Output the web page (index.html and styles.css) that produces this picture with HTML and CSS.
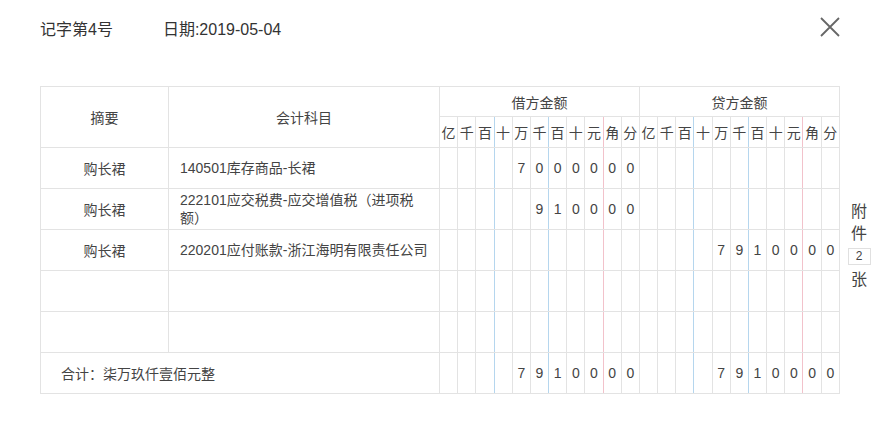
FILE: index.html
```html
<!DOCTYPE html>
<html lang="zh">
<head>
<meta charset="utf-8">
<title>记字第4号</title>
<link rel="stylesheet" href="styles.css">
</head>
<body>
<div class="page">
  <header class="head">
    <div class="head-info">
      <span class="voucher-no">记字第4号</span>
      <span class="voucher-date">日期:2019-05-04</span>
    </div>
    <button class="close" aria-label="关闭">
      <svg width="20" height="20" viewBox="0 0 20 20"><path d="M1 1L19 19M19 1L1 19" stroke="#666" stroke-width="1.8" fill="none"/></svg>
    </button>
  </header>
  <div class="main">
    <table class="voucher">
      <colgroup>
        <col class="c-sum"><col class="c-acc">
        <col><col><col><col><col><col><col><col><col><col><col>
        <col><col><col><col><col><col><col><col><col><col><col>
      </colgroup>
      <thead>
        <tr class="h1">
          <th rowspan="2">摘要</th>
          <th rowspan="2">会计科目</th>
          <th colspan="11">借方金额</th>
          <th colspan="11">贷方金额</th>
        </tr>
        <tr class="h2">
          <th class="d">亿</th><th class="d">千</th><th class="d b">百</th><th class="d">十</th><th class="d">万</th><th class="d b">千</th><th class="d">百</th><th class="d">十</th><th class="d r">元</th><th class="d">角</th><th class="d">分</th>
          <th class="d">亿</th><th class="d">千</th><th class="d b">百</th><th class="d">十</th><th class="d">万</th><th class="d b">千</th><th class="d">百</th><th class="d">十</th><th class="d r">元</th><th class="d">角</th><th class="d">分</th>
        </tr>
      </thead>
      <tbody>
        <tr>
          <td class="sum">购长裙</td>
          <td class="acc">140501库存商品-长裙</td>
          <td class="d"></td><td class="d"></td><td class="d b"></td><td class="d"></td><td class="d">7</td><td class="d b">0</td><td class="d">0</td><td class="d">0</td><td class="d r">0</td><td class="d">0</td><td class="d">0</td>
          <td class="d"></td><td class="d"></td><td class="d b"></td><td class="d"></td><td class="d"></td><td class="d b"></td><td class="d"></td><td class="d"></td><td class="d r"></td><td class="d"></td><td class="d"></td>
        </tr>
        <tr>
          <td class="sum">购长裙</td>
          <td class="acc">222101应交税费-应交增值税（进项税额）</td>
          <td class="d"></td><td class="d"></td><td class="d b"></td><td class="d"></td><td class="d"></td><td class="d b">9</td><td class="d">1</td><td class="d">0</td><td class="d r">0</td><td class="d">0</td><td class="d">0</td>
          <td class="d"></td><td class="d"></td><td class="d b"></td><td class="d"></td><td class="d"></td><td class="d b"></td><td class="d"></td><td class="d"></td><td class="d r"></td><td class="d"></td><td class="d"></td>
        </tr>
        <tr>
          <td class="sum">购长裙</td>
          <td class="acc">220201应付账款-浙江海明有限责任公司</td>
          <td class="d"></td><td class="d"></td><td class="d b"></td><td class="d"></td><td class="d"></td><td class="d b"></td><td class="d"></td><td class="d"></td><td class="d r"></td><td class="d"></td><td class="d"></td>
          <td class="d"></td><td class="d"></td><td class="d b"></td><td class="d"></td><td class="d">7</td><td class="d b">9</td><td class="d">1</td><td class="d">0</td><td class="d r">0</td><td class="d">0</td><td class="d">0</td>
        </tr>
        <tr>
          <td class="sum"></td>
          <td class="acc"></td>
          <td class="d"></td><td class="d"></td><td class="d b"></td><td class="d"></td><td class="d"></td><td class="d b"></td><td class="d"></td><td class="d"></td><td class="d r"></td><td class="d"></td><td class="d"></td>
          <td class="d"></td><td class="d"></td><td class="d b"></td><td class="d"></td><td class="d"></td><td class="d b"></td><td class="d"></td><td class="d"></td><td class="d r"></td><td class="d"></td><td class="d"></td>
        </tr>
        <tr>
          <td class="sum"></td>
          <td class="acc"></td>
          <td class="d"></td><td class="d"></td><td class="d b"></td><td class="d"></td><td class="d"></td><td class="d b"></td><td class="d"></td><td class="d"></td><td class="d r"></td><td class="d"></td><td class="d"></td>
          <td class="d"></td><td class="d"></td><td class="d b"></td><td class="d"></td><td class="d"></td><td class="d b"></td><td class="d"></td><td class="d"></td><td class="d r"></td><td class="d"></td><td class="d"></td>
        </tr>
        <tr>
          <td class="total" colspan="2">合计：柒万玖仟壹佰元整</td>
          <td class="d"></td><td class="d"></td><td class="d b"></td><td class="d"></td><td class="d">7</td><td class="d b">9</td><td class="d">1</td><td class="d">0</td><td class="d r">0</td><td class="d">0</td><td class="d">0</td>
          <td class="d"></td><td class="d"></td><td class="d b"></td><td class="d"></td><td class="d">7</td><td class="d b">9</td><td class="d">1</td><td class="d">0</td><td class="d r">0</td><td class="d">0</td><td class="d">0</td>
        </tr>
      </tbody>
    </table>
    <aside class="attach">
      <span>附</span>
      <span>件</span>
      <span class="count">2</span>
      <span>张</span>
    </aside>
  </div>
</div>
</body>
</html>
```

FILE: styles.css
```css
html, body {
  margin: 0;
  padding: 0;
  background: #fff;
}
body {
  font-family: "Liberation Sans", "Noto Sans CJK SC", sans-serif;
  color: #444;
  text-spacing-trim: space-all;
}
.page {
  padding: 0 0 0 40px;
}
.head {
  width: 800px;
  height: 54px;
  display: flex;
  align-items: center;
  justify-content: space-between;
}
.head-info {
  display: flex;
  gap: 50px;
  font-size: 16px;
  color: #333;
  padding-top: 1px;
}
.close {
  width: 20px;
  height: 20px;
  padding: 0;
  margin: 0;
  border: 0;
  background: none;
  display: flex;
}
.main {
  margin-top: 32px;
  display: flex;
}
.voucher {
  width: 800px;
  table-layout: fixed;
  border-collapse: collapse;
  font-size: 14px;
  color: #444;
}
.c-sum { width: 128px; }
.c-acc { width: 271px; }
.voucher th,
.voucher td {
  border: 1px solid #e3e3e3;
  padding: 0;
  font-weight: normal;
  text-align: center;
}
.h1 th { height: 29px; }
.h2 th { height: 30px; }
.voucher tbody td { height: 40px; }
.voucher .b { border-right-color: #b5d6ee; }
.voucher .r { border-right-color: #f2c2cb; }
.voucher .acc {
  text-align: left;
  padding: 0 6px 0 11px;
  line-height: 18px;
}
.voucher .total {
  text-align: left;
  padding-left: 20px;
}
.attach {
  width: 38px;
  margin-left: 0;
  align-self: center;
  padding-top: 12px;
  display: flex;
  flex-direction: column;
  align-items: center;
  font-size: 16px;
  line-height: 22px;
  color: #444;
}
.attach .count {
  width: 21px;
  height: 15px;
  margin: 3px 0 4px;
  border: 1px solid #e0e0e0;
  font-size: 12px;
  line-height: 15px;
  text-align: center;
}
```
